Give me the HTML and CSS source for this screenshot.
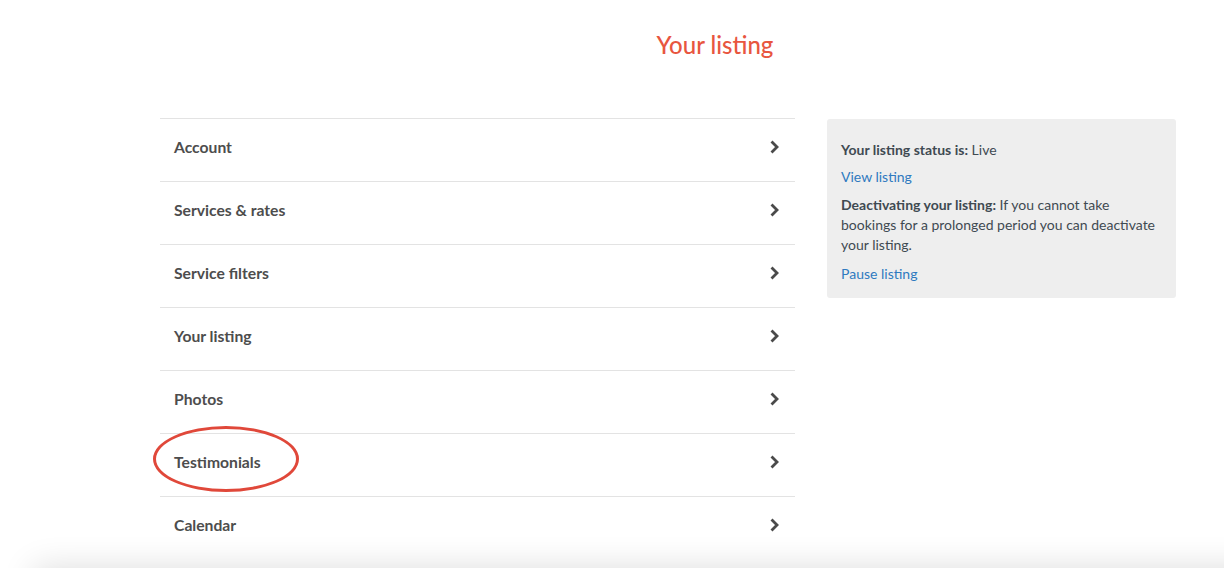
FILE: index.html
```html
<!DOCTYPE html>
<html>
<head>
<meta charset="utf-8">
<link rel="stylesheet" href="styles.css">
</head>
<body>
<div class="page">
  <h1 class="title">Your listing</h1>
  <div class="content">
    <ul class="menu">
      <li class="row"><span>Account</span><svg class="chev" viewBox="0 0 10 14"><polyline points="2.5,2.5 7,7 2.5,11.5"/></svg></li>
      <li class="row"><span>Services &amp; rates</span><svg class="chev" viewBox="0 0 10 14"><polyline points="2.5,2.5 7,7 2.5,11.5"/></svg></li>
      <li class="row"><span>Service filters</span><svg class="chev" viewBox="0 0 10 14"><polyline points="2.5,2.5 7,7 2.5,11.5"/></svg></li>
      <li class="row"><span>Your listing</span><svg class="chev" viewBox="0 0 10 14"><polyline points="2.5,2.5 7,7 2.5,11.5"/></svg></li>
      <li class="row"><span>Photos</span><svg class="chev" viewBox="0 0 10 14"><polyline points="2.5,2.5 7,7 2.5,11.5"/></svg></li>
      <li class="row highlight"><span>Testimonials</span><svg class="chev" viewBox="0 0 10 14"><polyline points="2.5,2.5 7,7 2.5,11.5"/></svg><i class="ring"></i></li>
      <li class="row"><span>Calendar</span><svg class="chev" viewBox="0 0 10 14"><polyline points="2.5,2.5 7,7 2.5,11.5"/></svg></li>
    </ul>
    <aside class="panel">
      <p><b>Your listing status is:</b> Live</p>
      <p class="gap"><a href="#">View listing</a></p>
      <p><b>Deactivating your listing:</b> If you cannot take bookings for a prolonged period you can deactivate your listing.</p>
      <p><a href="#">Pause listing</a></p>
    </aside>
  </div>
</div>
<div class="shade"></div>
</body>
</html>
```

FILE: styles.css
```css
html, body {
  margin: 0;
  padding: 0;
  background: #ffffff;
  overflow: hidden;
}
body {
  font-family: "Lato", "Open Sans", sans-serif;
  color: #4a4a4a;
  width: 1224px;
  height: 568px;
}
.page {
  padding-top: 30px;
}
.title {
  margin: 0;
  padding-left: 206px;
  text-align: center;
  font-size: 24px;
  font-weight: 500;
  line-height: 30px;
  color: #e8563f;
}
.content {
  display: flex;
  align-items: flex-start;
  gap: 32px;
  margin-top: 58px;
  padding-left: 160px;
}
.menu {
  list-style: none;
  margin: 0;
  padding: 0;
  width: 635px;
}
.row {
  position: relative;
  display: flex;
  align-items: center;
  justify-content: space-between;
  height: 62px;
  border-top: 1px solid #e3e3e3;
  padding: 0 15px 0 14px;
  font-size: 15.7px;
  font-weight: 700;
  color: #4d4d4d;
}
.row span {
  padding-bottom: 6px;
}
.chev {
  width: 10px;
  height: 14px;
  fill: none;
  stroke: #4a4a4a;
  stroke-width: 2.8;
  stroke-linecap: square;
  stroke-linejoin: miter;
  margin-bottom: 7px;
}
.ring {
  position: absolute;
  left: -7px;
  top: -8px;
  width: 140px;
  height: 60px;
  border: 3px solid #e0483a;
  border-radius: 50%;
}
.panel {
  width: 321px;
  margin-top: 1px;
  padding: 21px 14px 14px;
  background: #eeeeee;
  border-radius: 3px;
  font-size: 14px;
  line-height: 20px;
  color: #3f4a52;
}
.panel p {
  margin: 0 0 7px;
}
.panel p.gap {
  margin-bottom: 8px;
}
.panel p:last-child {
  margin: 9px 0 0;
}
.panel b {
  font-weight: 700;
}
.panel a {
  color: #2f7ac0;
  text-decoration: none;
}
.shade {
  position: fixed;
  left: 40px;
  right: -40px;
  top: 574px;
  height: 40px;
  background: #bbb;
  box-shadow: 0 0 34px 6px rgba(0, 0, 0, 0.14);
}
```
